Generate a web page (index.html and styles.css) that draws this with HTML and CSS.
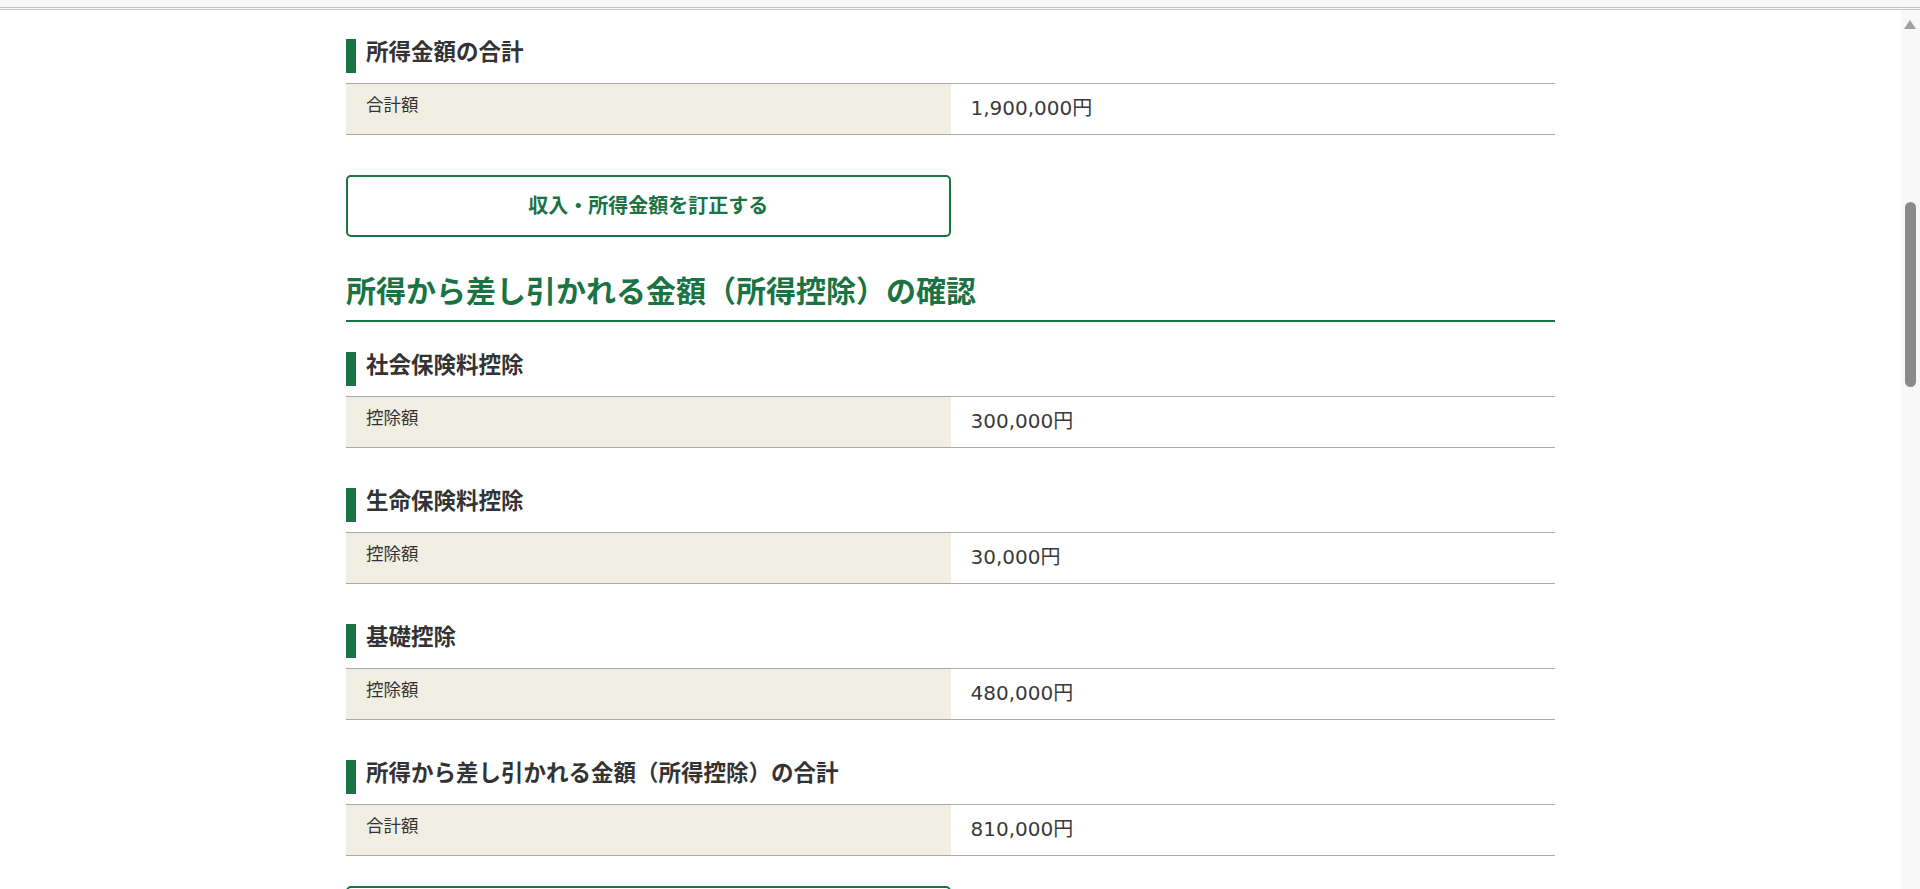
FILE: index.html
```html
<!DOCTYPE html>
<html lang="ja">
<head>
    <meta charset="UTF-8">
    <meta name="viewport" content="width=device-width, initial-scale=1.0">
    <title>所得・所得控除の確認</title>
    <link rel="stylesheet" href="styles.css">
</head>
<body>
    <div class="toolbar-edge"></div>

    <div class="viewport">
        <main class="page">
            <div class="inner">
                <section class="item">
                    <h3 class="item-title">所得金額の合計</h3>
                    <div class="amount-row">
                        <div class="amount-label">合計額</div>
                        <div class="amount-value">1,900,000円</div>
                    </div>
                </section>

                <a class="fix-button" href="#">収入・所得金額を訂正する</a>

                <h2 class="section-title">所得から差し引かれる金額（所得控除）の確認</h2>

                <section class="item">
                    <h3 class="item-title">社会保険料控除</h3>
                    <div class="amount-row">
                        <div class="amount-label">控除額</div>
                        <div class="amount-value">300,000円</div>
                    </div>
                </section>

                <section class="item">
                    <h3 class="item-title">生命保険料控除</h3>
                    <div class="amount-row">
                        <div class="amount-label">控除額</div>
                        <div class="amount-value">30,000円</div>
                    </div>
                </section>

                <section class="item">
                    <h3 class="item-title">基礎控除</h3>
                    <div class="amount-row">
                        <div class="amount-label">控除額</div>
                        <div class="amount-value">480,000円</div>
                    </div>
                </section>

                <section class="item">
                    <h3 class="item-title">所得から差し引かれる金額（所得控除）の合計</h3>
                    <div class="amount-row">
                        <div class="amount-label">合計額</div>
                        <div class="amount-value">810,000円</div>
                    </div>
                </section>

                <!-- 画面外に続くボタン（上端のみ表示） -->
                <a class="fix-button fix-button-last" href="#" aria-label="所得控除を訂正する"></a>
            </div>
        </main>

        <div class="scrollbar">
            <svg class="scroll-arrow" width="12" height="9" viewBox="0 0 12 9">
                <polygon points="6,0 12,9 0,9" fill="#a0a0a0"/>
            </svg>
            <div class="scroll-thumb"></div>
        </div>
    </div>
</body>
</html>
```

FILE: styles.css
```css
html, body {
    margin: 0;
    height: 889px;
    overflow: hidden;
}

body {
    font-family: "DejaVu Sans", "Noto Sans CJK JP", sans-serif;
    color: #333;
    background-color: #fff;
}

/* ブラウザのツールバー下端 */
.toolbar-edge {
    height: 7px;
    background-color: #f7f7f7;
    border-bottom: 3px double #c4c4c4;
}

.viewport {
    display: flex;
    height: 879px;
}

.page {
    flex: 1;
    overflow: hidden;
}

.inner {
    width: 1209px;
    margin: 0 auto;
    padding-top: 29px;
}

.item + .item {
    margin-top: 40px;
}

.item-title {
    margin: 0 0 10px;
    padding-left: 10px;
    padding-bottom: 8px;
    border-left: 10px solid #1a7343;
    font-size: 22.5px;
    line-height: 26px;
    font-weight: bold;
    color: #333;
}

.amount-row {
    display: grid;
    grid-template-columns: 1fr 1fr;
    border-top: 1px solid #aaa;
    border-bottom: 1px solid #aaa;
}

.amount-label {
    background-color: #f1eee4;
    padding: 9px 20px 11px;
    font-size: 17.5px;
    line-height: 24px;
}

.amount-value {
    padding: 9px 20px 11px;
    font-size: 20px;
    line-height: 30px;
    color: #3a3a3a;
}

.fix-button {
    display: block;
    width: 50%;
    box-sizing: border-box;
    height: 62px;
    margin-top: 40px;
    border: 2px solid #1a7343;
    border-radius: 5px;
    text-align: center;
    line-height: 58px;
    font-size: 20px;
    font-weight: bold;
    color: #1a7343;
    text-decoration: none;
}

.fix-button-last {
    margin-top: 30px;
}

.section-title {
    margin: 33px 0 30px;
    padding-bottom: 6px;
    border-bottom: 2px solid #1a7343;
    font-size: 30px;
    line-height: 44px;
    font-weight: bold;
    color: #1a7343;
}

/* スクロールバー */
.scrollbar {
    width: 19px;
    background-color: #f8f8f8;
    display: flex;
    flex-direction: column;
}

.scroll-arrow {
    display: block;
    margin: 10px 0 0 3px;
}

.scroll-thumb {
    width: 11px;
    height: 185px;
    margin: 173px 0 0 4px;
    border-radius: 6px;
    background-color: #8a8a8a;
}
```
